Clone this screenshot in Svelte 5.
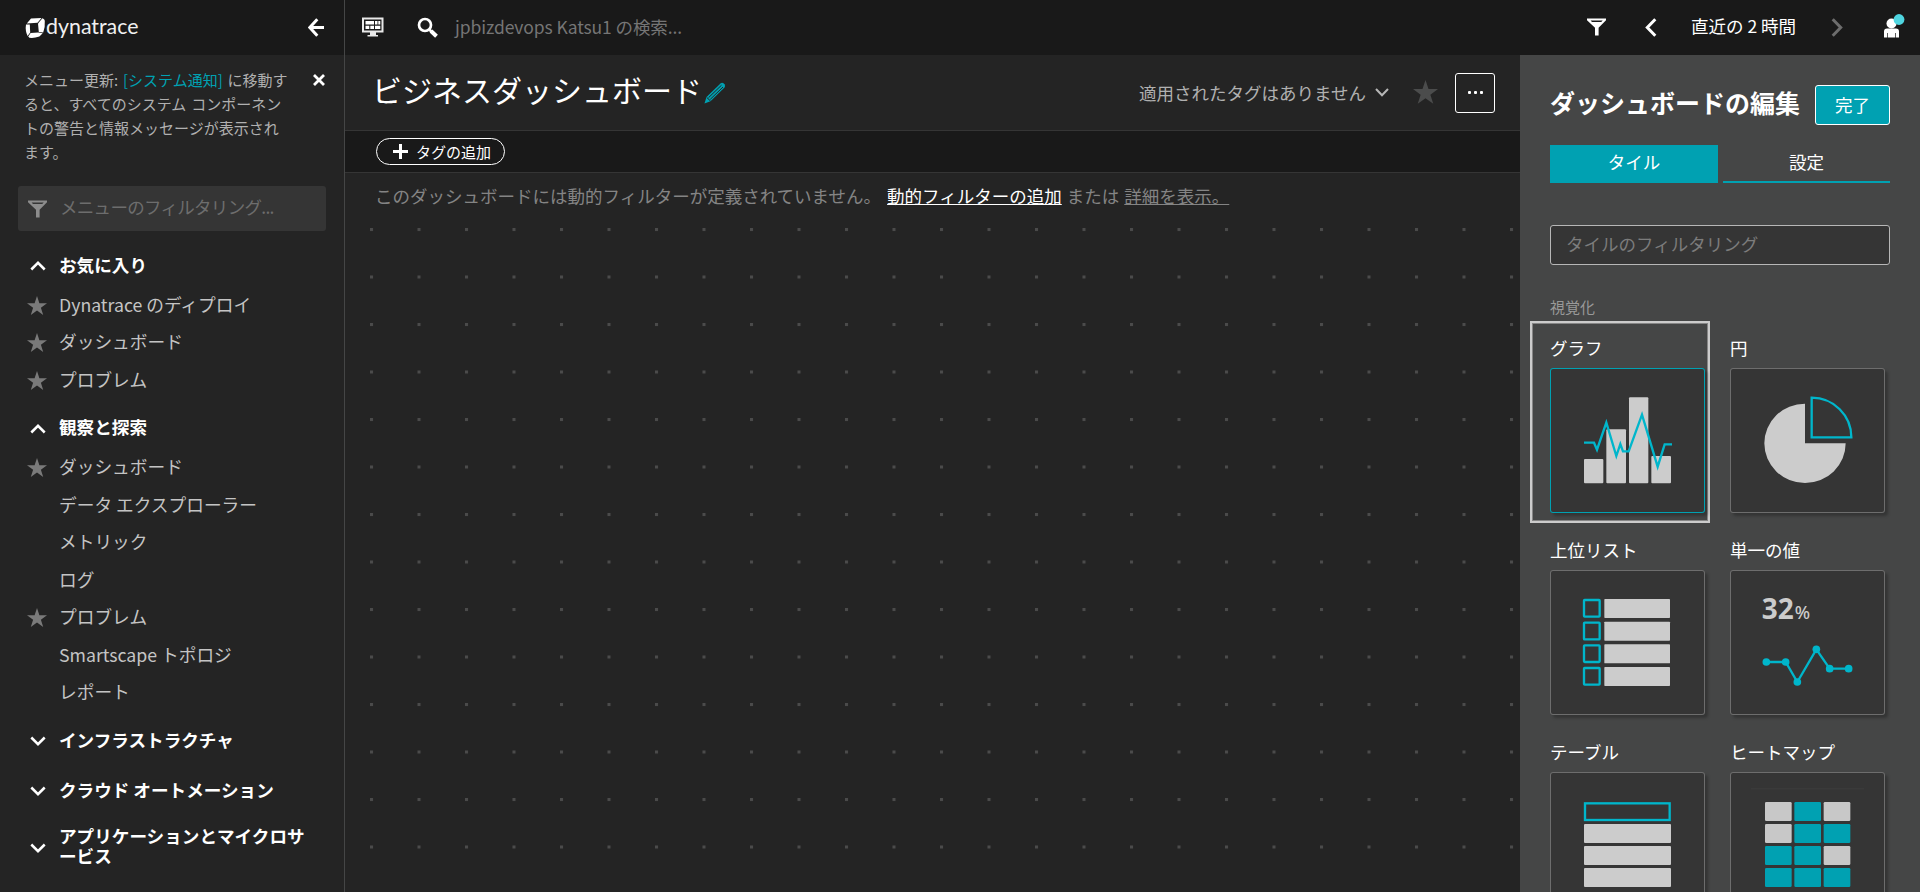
<script>
  const groups = [
    {
      title: ['お気に入り'],
      open: true,
      items: [
        { label: 'Dynatrace のディプロイ', star: true },
        { label: 'ダッシュボード', star: true },
        { label: 'プロブレム', star: true }
      ]
    },
    {
      title: ['観察と探索'],
      open: true,
      items: [
        { label: 'ダッシュボード', star: true },
        { label: 'データ エクスプローラー' },
        { label: 'メトリック' },
        { label: 'ログ' },
        { label: 'プロブレム', star: true },
        { label: 'Smartscape トポロジ' },
        { label: 'レポート' }
      ]
    },
    { title: ['インフラストラクチャ'], items: [] },
    { title: ['クラウド オートメーション'], items: [] },
    { title: ['アプリケーションとマイクロサ', 'ービス'], items: [] }
  ];

  const tiles = [
    { kind: 'graph', label: 'グラフ', selected: true },
    { kind: 'pie', label: '円' },
    { kind: 'toplist', label: '上位リスト' },
    { kind: 'single', label: '単一の値' },
    { kind: 'table', label: 'テーブル' },
    { kind: 'heat', label: 'ヒートマップ' }
  ];

  const heat = ['010', '011', '110', '111'];
  const points = [[109, 276], [167, 276], [202, 336], [259, 238], [299, 296], [356, 296]];
</script>

{#snippet star(size)}
  <svg class="star" width={size} height={size} viewBox="0 0 20 20">
    <path d="M10 0l2.4 7.2H20l-6.1 4.5 2.3 7.3-6.2-4.4L3.8 19l2.3-7.3L0 7.2h7.6z" />
  </svg>
{/snippet}

{#snippet funnel()}
  <svg width="19" height="18" viewBox="0 0 19 18" fill="currentColor">
    <path fill-rule="evenodd" d="M0 0.5h19v1.7L11.6 9.8V17.5H8V9.8L0 2.2zM3.6 2.5l1.4 1.5h9.2l1.5-1.5z" />
  </svg>
{/snippet}

<div class="app">
  <header class="topbar">
    <div class="brand">
      <svg class="logo" width="118" height="30" viewBox="0 0 118 30">
        <g fill="#fff">
          <path d="M6 3.5L16.500 3L12.500 7.800L1.800 8.600z" />
          <path d="M1 9.500L4.800 9.400L5.200 17.400L2.600 21Q0 16 1 9.500z" />
          <path d="M17.400 3.200Q19.600 3.700 19.800 5.700Q20.300 12 18.200 17.500L13.800 17L13 8.400z" />
          <path d="M5.600 18L13.200 17.600L17.700 18.300L14.400 21.600Q9 23.400 4.400 22.800L3.200 21.600z" />
        </g>
        <text x="21" y="19" textLength="92.500" lengthAdjust="spacingAndGlyphs">dynatrace</text>
      </svg>
      <svg class="back" width="17" height="19" viewBox="0 0 17 19">
        <path d="M16 9.5H2M9.3 1.3L1.8 9.5l7.5 8.2" />
      </svg>
    </div>
    <div class="search">
      <svg class="screen" width="22" height="20" viewBox="0 0 22 20">
        <path fill="#e8e8e8" fill-rule="evenodd" d="M0 0.5h21.5v15H14v2.5h2V19.500H5.500V18H8v-2.500H0zM2 2.500v11h17.500v-11z" />
        <path fill="#fff" d="M3.500 4h8.500v3.500H3.500zM13 4h2.500v3.500H13zM16.300 4h2v3.500h-2zM3.500 8.700h3.800v3.300H3.500zM8.300 8.700h3.700v3.300H8.300zM13 8.700h5.300v3.300H13z" />
      </svg>
      <svg class="glass" width="22" height="22" viewBox="0 0 22 22">
        <circle cx="8" cy="8" r="6" />
        <path d="M12.300 12.500l2 2" />
        <path class="grip" d="M14 14l5.500 5.300" />
      </svg>
      <span class="query">jpbizdevops Katsu1 の検索...</span>
    </div>
    <div class="range">
      <span class="filter">{@render funnel()}</span>
      <svg class="prev" width="12" height="19" viewBox="0 0 12 19"><path d="M10.300 1.300L2.300 9.500l8 8.200" /></svg>
      <span class="period">直近の 2 時間</span>
      <svg class="next" width="12" height="19" viewBox="0 0 12 19"><path d="M1.700 1.300L9.700 9.500l-8 8.200" /></svg>
      <svg class="user" width="21" height="25" viewBox="0 0 21 25">
        <circle cx="7.500" cy="9.500" r="5" fill="#fff" />
        <path fill="#fff" d="M0 23.500v-6Q0 14.500 3 14.500h9q3 0 3 3v6h-3v-4.500h-.7v4.500H3.700V19H3v4.500z" />
        <circle cx="15" cy="5.500" r="5.400" fill="#4fd5e0" />
      </svg>
    </div>
  </header>

  <div class="body">
    <nav class="side">
      <div class="notice">
        <p>
          メニュー更新: <a href="#top">[システム通知]</a> に移動す<br />ると、すべてのシステム コンポーネン<br />トの警告と情報メッセージが表示され<br />ます。
        </p>
        <svg width="12" height="12" viewBox="0 0 12 12"><path d="M1 1l10 10M11 1L1 11" /></svg>
      </div>
      <div class="menu-filter">
        {@render funnel()}
        <span>メニューのフィルタリング...</span>
      </div>
      <div class="groups">
        {#each groups as group}
          <section>
            <h2>
              <svg width="16" height="10" viewBox="0 0 16 10">
                <path d={group.open ? 'M1.300 8.500L8 1.800l6.700 6.700' : 'M1.300 1.500L8 8.200l6.700-6.700'} />
              </svg>
              <span>{#each group.title as line}<span class="line">{line}</span>{/each}</span>
            </h2>
            {#if group.items.length}
              <ul>
                {#each group.items as item}
                  <li>
                    <span class="mark">{#if item.star}{@render star(20)}{/if}</span>
                    {item.label}
                  </li>
                {/each}
              </ul>
            {/if}
          </section>
        {/each}
      </div>
    </nav>

    <main>
      <div class="titlebar">
        <h1>ビジネスダッシュボード</h1>
        <svg class="pencil" width="22" height="22" viewBox="0 0 22 22">
          <path fill="#00a1b2" d="M0.500 21.500l2-6.500L16.500 1.500Q18 0.300 19.500 1.300l1 1Q21.800 4 20.500 5.500L6.500 19.300z" />
          <path stroke="#242424" stroke-width="1" fill="none" d="M4.500 15.700L17.500 3.200M6.300 17.300L19 5M2.800 15.500l3.700 3.500" />
        </svg>
        <div class="tags">適用されたタグはありません</div>
        <svg class="down" width="14" height="9" viewBox="0 0 14 9"><path d="M1 1l6 6.300L13 1" /></svg>
        {@render star(25)}
        <button class="more" aria-label="More"><i></i><i></i><i></i></button>
      </div>
      <div class="tagbar">
        <button class="add">
          <svg width="15" height="15" viewBox="0 0 15 15"><path d="M7.500 0v15M0 7.500h15" /></svg>
          タグの追加
        </button>
      </div>
      <div class="canvas">
        <p>
          <span>このダッシュボードには動的フィルターが定義されていません。</span><a class="strong" href="#add">動的フィルターの追加</a><span class="or">または</span><a href="#more">詳細を表示。</a>
        </p>
        <svg class="dots" width="1150" height="664">
          <defs>
            <pattern id="grid" width="47.500" height="47.500" patternUnits="userSpaceOnUse">
              <rect width="3" height="3" fill="#4b4b4b" />
            </pattern>
          </defs>
          <rect width="1150" height="664" fill="url(#grid)" />
        </svg>
      </div>
    </main>

    <aside>
      <div class="edit">
        <h2>ダッシュボードの編集</h2>
        <button>完了</button>
      </div>
      <div class="tabs"><span class="on">タイル</span><span>設定</span></div>
      <div class="tile-filter">タイルのフィルタリング</div>
      <h3>視覚化</h3>
      <div class="tiles">
        {#each tiles as tile}
          <div class="cell" class:selected={tile.selected}>
            <div class="name">{tile.label}</div>
            <div class="tile">
              <svg width="155" height="145" viewBox="0 0 465 435">
                {#if tile.kind === 'graph'}
                  <g fill="#ccc">
                    <rect x="102" y="273" width="58" height="73" rx="3" />
                    <rect x="169" y="184" width="59" height="162" rx="3" />
                    <rect x="237" y="88" width="58" height="258" rx="3" />
                    <rect x="304" y="264" width="59" height="82" rx="3" />
                  </g>
                  <path class="trace" d="M102 224h30l9 21 28-81 30 100 12-36 8 22h17l40-110 47 156 21-67h22" />
                {:else if tile.kind === 'pie'}
                  <path fill="#ccc" d="M225 107V226H347A122 119 0 1 1 225 107z" />
                  <path class="trace" d="M245 89V208H364A119 119 0 0 0 245 89z" />
                {:else if tile.kind === 'toplist'}
                  {#each [0, 1, 2, 3] as row}
                    <rect class="trace" x="102" y={90 + row * 68} width="47" height="50" rx="2" />
                    <rect fill="#ccc" x="163" y={87 + row * 68} width="197" height="57" rx="2" />
                  {/each}
                {:else if tile.kind === 'single'}
                  <text class="big" x="95" y="147" textLength="96" lengthAdjust="spacingAndGlyphs">32</text>
                  <text class="pct" x="194" y="147" textLength="46" lengthAdjust="spacingAndGlyphs">%</text>
                  <polyline class="trace" points={points.map((p) => p.join()).join(' ')} />
                  {#each points as [x, y]}<circle cx={x} cy={y} r="11.500" fill="#00b6cb" />{/each}
                {:else if tile.kind === 'table'}
                  <rect class="trace" x="105" y="94" width="254" height="50" />
                  {#each [0, 1, 2] as row}
                    <rect fill="#ccc" x="102" y={156 + row * 66} width="261" height="57" rx="3" />
                  {/each}
                {:else}
                  <rect x="63" y="48" width="339" height="5" fill="#3a3a3a" />
                  {#each heat as line, row}
                    {#each line as on, col}
                      <rect fill={on === '1' ? '#00a1b2' : '#c8c8c8'} x={105 + col * 88} y={90 + row * 66} width="80" height="57" rx="4" />
                    {/each}
                  {/each}
                {/if}
              </svg>
            </div>
          </div>
        {/each}
      </div>
    </aside>
  </div>
</div>

<style>
  :global(body) {
    overflow: hidden;
    background: #242424;
  }
  * {
    box-sizing: border-box;
  }
  h1, h2, h3, p, ul {
    margin: 0;
    padding: 0;
    font-weight: 400;
  }
  svg {
    flex: none;
    display: block;
  }
  button {
    font: inherit;
    color: #fff;
    padding: 0;
  }
  .app {
    width: 1920px;
    height: 892px;
    overflow: hidden;
    display: flex;
    flex-direction: column;
    font-family: 'Noto Sans CJK JP', 'Noto Sans', sans-serif;
    font-size: 17.500px;
    font-weight: 400;
    line-height: 24px;
    white-space: nowrap;
    color: #c4c4c4;
  }
  .topbar {
    height: 55px;
    flex: none;
    display: flex;
    background: #191919;
  }
  .brand {
    width: 345px;
    border-right: 1px solid #454646;
    display: flex;
    justify-content: space-between;
    padding: 15px 19px 0 25px;
  }
  .logo {
    overflow: visible;
  }
  .logo text {
    font: 400 21.500px Lato, sans-serif;
    fill: #f0f0f0;
  }
  .back {
    margin-top: 3px;
  }
  .back path, .prev path, .next path {
    fill: none;
    stroke: #fff;
    stroke-width: 3;
  }
  .next path {
    stroke: #6d6d6d;
  }
  .search {
    flex: 1;
    display: flex;
    padding: 17px 0 0 17px;
  }
  .screen {
    margin-right: 33px;
  }
  .glass {
    fill: none;
    stroke: #fff;
    stroke-width: 2.700;
  }
  .grip {
    stroke-width: 4;
  }
  .query {
    margin: -2px 0 0 16px;
    color: #757575;
    letter-spacing: -0.100px;
  }
  .range {
    width: 335px;
    display: flex;
    align-items: flex-start;
    color: #fff;
    padding-top: 18px;
  }
  .filter {
    margin: 0 39px 0 2px;
  }
  .period {
    width: 107px;
    margin: -4px 33px 0 34px;
  }
  .user {
    margin: -4px 0 0 41px;
  }
  .body {
    flex: 1;
    min-height: 0;
    display: flex;
  }
  .side {
    width: 345px;
    border-right: 1px solid #454646;
    background: #242424;
    display: flex;
    flex-direction: column;
  }
  .notice {
    display: flex;
    justify-content: space-between;
    padding: 13px 19px 0 24px;
    height: 131px;
    font-size: 15px;
    word-spacing: 1.500px;
    color: #b0b0b0;
  }
  .notice a {
    color: #00a1b2;
    text-decoration: none;
  }
  .notice svg {
    margin-top: 6px;
    stroke: #fff;
    stroke-width: 2.800;
  }
  .menu-filter {
    height: 45px;
    margin: 0 18px;
    padding: 0 10px;
    display: flex;
    align-items: center;
    gap: 13px;
    border-radius: 3px;
    background: #353535;
    color: #8c8c8c;
  }
  .menu-filter span {
    color: #6d6d6d;
    margin-top: -4px;
    letter-spacing: -0.700px;
  }
  .groups {
    display: flex;
    flex-direction: column;
    gap: 8px;
    padding-top: 14px;
  }
  .groups h2 {
    min-height: 42px;
    padding: 9px 0 9px 30px;
    display: flex;
    align-items: center;
    gap: 13px;
    font-size: 17.600px;
    font-weight: 700;
    line-height: 20px;
    color: #fff;
  }
  .groups h2 svg {
    fill: none;
    stroke: #fff;
    stroke-width: 2.500;
  }
  .groups h2 > span {
    margin-top: -3px;
  }
  .line {
    display: block;
  }
  .groups ul {
    list-style: none;
    font-size: 17.700px;
  }
  .groups li {
    height: 37.500px;
    display: flex;
    align-items: center;
    padding: 0 0 4px 27px;
  }
  .mark {
    width: 32px;
    padding-top: 4px;
  }
  .star {
    fill: #7a7a7a;
  }
  main {
    flex: 1;
    display: flex;
    flex-direction: column;
    background: #242424;
  }
  .titlebar {
    height: 76px;
    border-bottom: 1px solid #353535;
    display: flex;
    align-items: center;
    padding: 0 25px 0 27px;
  }
  h1 {
    width: 332px;
    font-size: 30px;
    line-height: 40px;
    margin-top: -8px;
    color: #fff;
  }
  .pencil {
    margin-top: 1px;
  }
  .tags {
    margin: 0 9px 0 auto;
    color: #b0b0b0;
  }
  .down {
    fill: none;
    stroke: #b7b7b7;
    stroke-width: 2;
  }
  .titlebar .star {
    fill: #4b4c4c;
    margin: 0 17px 0 24px;
  }
  .more {
    width: 40px;
    height: 40px;
    border: 1px solid #fff;
    border-radius: 3px;
    background: none;
    display: flex;
    align-items: center;
    justify-content: center;
    gap: 3px;
  }
  .more i {
    width: 3px;
    height: 3px;
    border-radius: 1px;
    background: #fff;
  }
  .tagbar {
    height: 42px;
    border-bottom: 1px solid #353535;
    background: #191919;
    padding: 7px 0 0 31px;
  }
  .add {
    width: 129px;
    height: 27px;
    border: 1px solid #fff;
    border-radius: 14px;
    background: none;
    font-size: 15px;
    line-height: 22px;
    display: flex;
    align-items: center;
    padding-left: 16px;
    gap: 8px;
  }
  .add svg {
    stroke: #fff;
    stroke-width: 3;
  }
  .canvas {
    flex: 1;
    display: flex;
    flex-direction: column;
  }
  .canvas p {
    height: 55px;
    padding: 11px 0 0 30px;
    display: flex;
    color: #848484;
  }
  .canvas a {
    color: #848484;
    text-decoration: underline;
    text-underline-offset: 1px;
  }
  .canvas a.strong {
    color: #fff;
    margin-left: 6px;
  }
  .or {
    margin: 0 5px;
  }
  .dots {
    margin-left: 25px;
  }
  aside {
    width: 400px;
    background: #454646;
    color: #fff;
    padding: 30px 30px 0;
  }
  .edit {
    display: flex;
    justify-content: space-between;
    align-items: center;
    height: 40px;
  }
  .edit h2 {
    font-size: 25px;
    font-weight: 700;
    line-height: 36px;
    margin-top: -6px;
  }
  .edit button {
    width: 75px;
    height: 40px;
    border: 1px solid #fff;
    border-radius: 3px;
    background: #00a1b2;
  }
  .tabs {
    display: grid;
    grid-template-columns: 168px 167px;
    gap: 5px;
    margin-top: 20px;
    height: 38px;
    text-align: center;
    line-height: 34px;
  }
  .tabs span {
    border-bottom: 2px solid #00a1b2;
  }
  .tabs .on {
    background: #00a1b2;
  }
  .tile-filter {
    height: 40px;
    margin-top: 42px;
    border: 1px solid #b7b7b7;
    border-radius: 3px;
    background: #353535;
    color: #7c7c7c;
    padding-left: 15px;
    line-height: 36px;
  }
  h3 {
    font-size: 15px;
    color: #999;
    height: 56px;
    padding-top: 30px;
  }
  .tiles {
    display: grid;
    grid-template-columns: 180px 180px;
    grid-auto-rows: 202px;
    margin-left: -20px;
  }
  .cell {
    padding: 12px 0 0 17px;
    border: 3px solid transparent;
  }
  .selected {
    border: 2px solid #ccc;
    padding: 13px 0 0 18px;
    box-shadow: inset 0 0 0 1px #868686;
  }
  .name {
    height: 32px;
    line-height: 24px;
  }
  .tile {
    width: 155px;
    height: 145px;
    border-radius: 3px;
    background: #353535;
    box-shadow: inset 0 0 0 1px #6d6d6d, 3px 3px 3px rgba(0, 0, 0, 0.250);
  }
  .selected .tile {
    box-shadow: inset 0 0 0 1px #00a1b2, 3px 3px 3px rgba(0, 0, 0, 0.250);
  }
  .trace {
    fill: none;
    stroke: #00b6cb;
    stroke-width: 7;
  }
  .big {
    font: 700 86px 'Noto Sans', sans-serif;
    fill: #ccc;
  }
  .pct {
    font: 500 52px 'Noto Sans', sans-serif;
    fill: #ccc;
  }
</style>
